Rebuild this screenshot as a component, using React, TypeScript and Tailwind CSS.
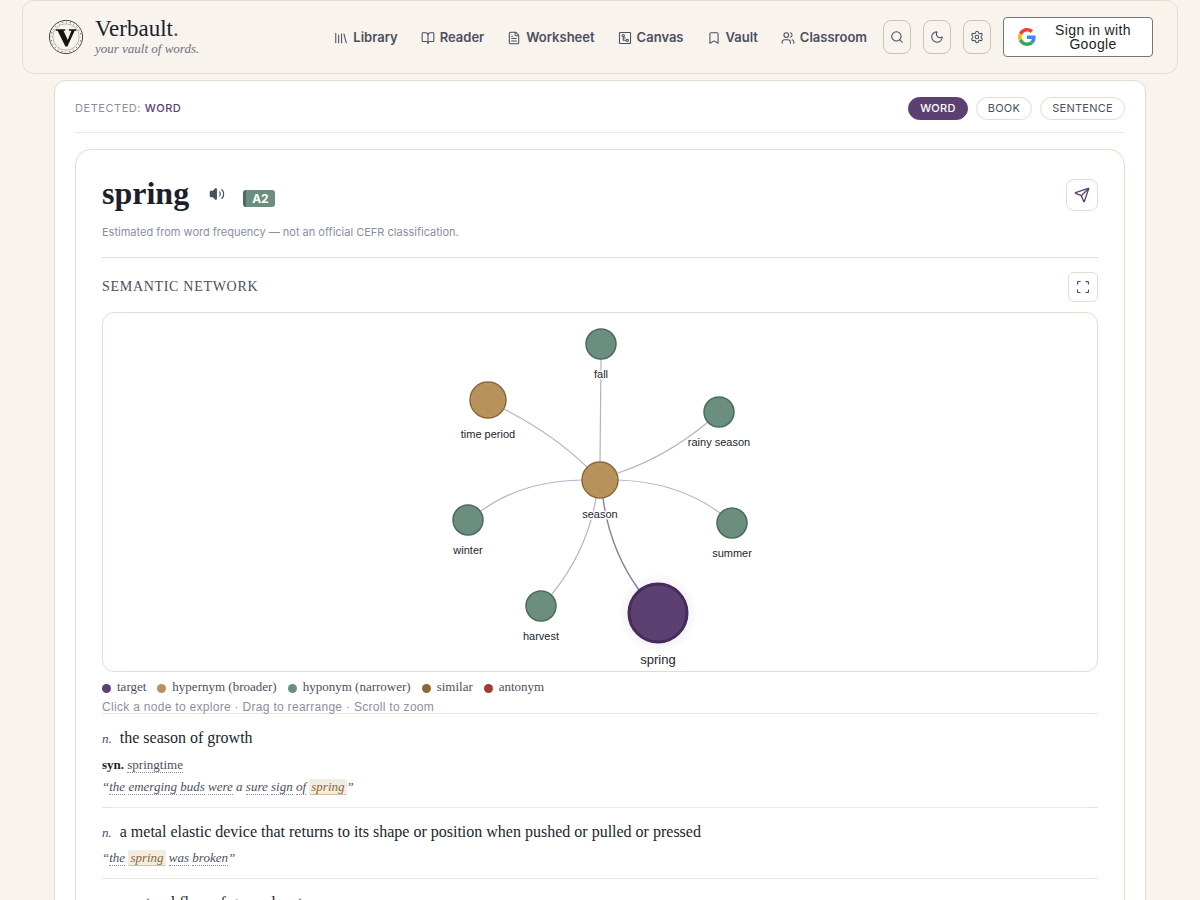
import { useState } from 'react';
import { BookOpen, Bookmark, FileText, Moon, Search, Send, Settings, Users, Volume2 } from 'lucide-react';

type Mode = 'word' | 'book' | 'sentence';
type NodeKind = 'target' | 'hypernym' | 'hyponym';

interface GraphNode {
  label: string;
  kind: NodeKind;
  x: number;
  y: number;
}

interface Sense {
  pos: string;
  definition: string;
  synonyms?: string[];
  example?: string[];
}

const serif = "font-['Liberation_Serif',serif]";
const sans = 'font-[Inter,sans-serif]';

const MODES: Mode[] = ['word', 'book', 'sentence'];

const NODES: GraphNode[] = [
  { label: 'fall', kind: 'hyponym', x: 498, y: 31 },
  { label: 'time period', kind: 'hypernym', x: 385, y: 87 },
  { label: 'rainy season', kind: 'hyponym', x: 616, y: 99 },
  { label: 'season', kind: 'hypernym', x: 497, y: 167 },
  { label: 'winter', kind: 'hyponym', x: 365, y: 207 },
  { label: 'summer', kind: 'hyponym', x: 629, y: 210 },
  { label: 'harvest', kind: 'hyponym', x: 438, y: 293 },
  { label: 'spring', kind: 'target', x: 555, y: 300 },
];

const EDGES = [
  'M497 149L498 46',
  'M401 96Q450 121 484 154',
  'M515 160Q563 144 605 109',
  'M479 167Q419 168 378 198',
  'M515 167Q575 169 617 200',
  'M493 185Q484 238 449 281',
];

const KIND_STYLE = {
  target: { r: 29, fill: '#5c4072', stroke: '#452c5c', strokeWidth: 3, labelOffset: 51 },
  hypernym: { r: 18, fill: '#b8925c', stroke: '#8c6a3a', strokeWidth: 1.5, labelOffset: 38 },
  hyponym: { r: 15, fill: '#6b8e7f', stroke: '#4a6d5e', strokeWidth: 1.5, labelOffset: 34 },
};

const LEGEND = [
  { label: 'target', dot: 'bg-[#5c4072]' },
  { label: 'hypernym (broader)', dot: 'bg-[#b8925c]' },
  { label: 'hyponym (narrower)', dot: 'bg-[#6b8e7f]' },
  { label: 'similar', dot: 'bg-[#8c6834]' },
  { label: 'antonym', dot: 'bg-[#a23b32]' },
];

const SENSES: Sense[] = [
  {
    pos: 'n.',
    definition: 'the season of growth',
    synonyms: ['springtime'],
    example: ['the', 'emerging', 'buds', 'were', 'a', 'sure', 'sign', 'of', 'spring'],
  },
  {
    pos: 'n.',
    definition: 'a metal elastic device that returns to its shape or position when pushed or pulled or pressed',
    example: ['the', 'spring', 'was', 'broken'],
  },
  { pos: 'n.', definition: 'a natural flow of ground water' },
];

function VaultLogo() {
  return (
    <svg viewBox="0 0 36 36" className="size-9 shrink-0" fill="none" aria-hidden="true">
      <circle cx="18" cy="18" r="16.6" stroke="#4a4a47" strokeWidth="1" />
      <circle cx="18" cy="18" r="13.2" stroke="#a3a19b" strokeWidth="0.7" />
      <circle cx="18" cy="18" r="14.9" stroke="#3a3a38" strokeWidth="1" strokeDasharray="1 6.802" strokeDashoffset="-3.4" />
      <circle cx="18" cy="18" r="14.9" stroke="#a3a19b" strokeWidth="3" strokeDasharray="0.7 7.102" strokeDashoffset="0.35" />
      <path d="M7.800 10.200h9.400v1.500h-1.700l4.300 9.300 3.600-9.300h-2.500v-1.500h7.400v1.500h-1.700L19.400 27.400h-2L9.600 11.700H7.800z" fill="#151512" />
    </svg>
  );
}

// Three upright spines and one that leans
function ShelfIcon() {
  return (
    <svg viewBox="0 0 24 24" className="size-3.5" fill="none" stroke="currentColor" strokeWidth="1.8" strokeLinecap="round" aria-hidden="true">
      <path d="M3 4v16M8 7v13M13 5v15M17 5l4 15" />
    </svg>
  );
}

function CanvasIcon() {
  return (
    <svg viewBox="0 0 24 24" className="size-3.5" fill="none" stroke="currentColor" strokeWidth="1.8" aria-hidden="true">
      <rect x="2.5" y="2.5" width="19" height="19" rx="1" />
      <circle cx="9" cy="8" r="2" />
      <circle cx="16" cy="16" r="2" />
      <path d="M9 10v6h5M9 12h4" />
    </svg>
  );
}

function GoogleIcon() {
  return (
    <svg viewBox="0 0 48 48" className="size-[18px] shrink-0" aria-hidden="true">
      <path fill="#EA4335" d="M24 9.5c3.54 0 6.71 1.22 9.21 3.6l6.85-6.85C35.9 2.38 30.47 0 24 0 14.62 0 6.51 5.38 2.56 13.22l7.98 6.19C12.43 13.72 17.74 9.5 24 9.5z" />
      <path fill="#4285F4" d="M46.98 24.55c0-1.57-.15-3.09-.38-4.55H24v9.02h12.94c-.58 2.96-2.26 5.48-4.78 7.18l7.73 6c4.51-4.18 7.09-10.36 7.09-17.65z" />
      <path fill="#FBBC05" d="M10.53 28.59c-.48-1.45-.76-2.99-.76-4.59s.27-3.14.76-4.59l-7.98-6.19C.92 16.46 0 20.12 0 24c0 3.88.92 7.54 2.56 10.78l7.97-6.19z" />
      <path fill="#34A853" d="M24 48c6.48 0 11.93-2.13 15.89-5.81l-7.73-6c-2.15 1.45-4.92 2.3-8.16 2.3-6.26 0-11.57-4.22-13.47-9.91l-7.98 6.19C6.51 42.62 14.62 48 24 48z" />
    </svg>
  );
}

function ExpandIcon() {
  return (
    <svg viewBox="0 0 12 12" className="size-3" fill="none" stroke="currentColor" strokeWidth="1.2" aria-hidden="true">
      <path d="M.6 3.500v-2a1 1 0 0 1 1-1h2M8.500 .6h2a1 1 0 0 1 1 1v2M11.500 8.500v2a1 1 0 0 1-1 1h-2M3.500 11.500h-2a1 1 0 0 1-1-1v-2" />
    </svg>
  );
}

const NAV = [
  { label: 'Library', icon: <ShelfIcon /> },
  { label: 'Reader', icon: <BookOpen size={14} strokeWidth={1.8} /> },
  { label: 'Worksheet', icon: <FileText size={14} strokeWidth={1.8} /> },
  { label: 'Canvas', icon: <CanvasIcon /> },
  { label: 'Vault', icon: <Bookmark size={14} strokeWidth={1.8} /> },
  { label: 'Classroom', icon: <Users size={14} strokeWidth={1.8} /> },
];

function Header() {
  const toolButton =
    'flex h-[34px] w-7 items-center justify-center rounded-lg border border-[#cbc3ae] text-[#4a5060]';

  return (
    <header className="mx-[22px] flex items-center justify-between rounded-xl border border-[#e5dccd] bg-[#f8f3ec] py-4 pr-6 pl-[25px]">
      <a href="#" className="flex items-center gap-[11px]">
        <VaultLogo />
        <span className={`flex flex-col ${serif}`}>
          <span className="text-[23px] leading-6 text-[#1a1f2e]">
            Verbault<span className="text-[#5c4072]">.</span>
          </span>
          <span className="text-[13px] leading-4 text-[#6b7080] italic">your vault of words.</span>
        </span>
      </a>

      <div className="flex items-center gap-4">
        <nav className={`flex items-center gap-[23px] pt-0.5 text-[13px] font-semibold text-[#4a5060] ${sans}`}>
          {NAV.map(({ label, icon }) => (
            <a key={label} href="#" className="flex items-center gap-[5px]">
              {icon}
              {label}
            </a>
          ))}
        </nav>

        <div className="flex items-center gap-3">
          <button type="button" aria-label="Search" className={toolButton}>
            <Search size={14} strokeWidth={1.8} />
          </button>
          <button type="button" aria-label="Dark mode" className={toolButton}>
            <Moon size={14} strokeWidth={1.8} />
          </button>
          <button type="button" aria-label="Settings" className={toolButton}>
            <Settings size={14} strokeWidth={1.8} />
          </button>
          <button
            type="button"
            className="flex h-10 w-[150px] items-center rounded border border-[#747775] bg-white px-3.5 font-['Liberation_Sans',sans-serif] text-sm leading-[14px] text-[#1f1f1f]"
          >
            <GoogleIcon />
            <span className="flex-1 pl-3 text-center tracking-wide">Sign in with Google</span>
          </button>
        </div>
      </div>
    </header>
  );
}

function SemanticGraph() {
  return (
    <svg
      viewBox="0 0 994 358"
      role="img"
      aria-label="Semantic network"
      className="block w-full rounded-xl font-['Liberation_Sans',sans-serif]"
    >
      <defs>
        <radialGradient id="halo">
          <stop offset="0.7" stopColor="#5c4072" stopOpacity="0.08" />
          <stop offset="1" stopColor="#5c4072" stopOpacity="0" />
        </radialGradient>
      </defs>
      <g fill="none" stroke="#b9afc6" strokeWidth="1.2">
        {EDGES.map(d => (
          <path key={d} d={d} />
        ))}
      </g>
      <path d="M500 185Q507 237 536 277" fill="none" stroke="#8d7b9e" strokeWidth="1.4" />
      <circle cx="555" cy="300" r="40" fill="url(#halo)" />
      {NODES.map(node => {
        const style = KIND_STYLE[node.kind];
        return (
          <g key={node.label} className="cursor-pointer">
            <circle cx={node.x} cy={node.y} r={style.r} fill={style.fill} stroke={style.stroke} strokeWidth={style.strokeWidth} />
            <text
              x={node.x}
              y={node.y + style.labelOffset}
              textAnchor="middle"
              fill="#1a1f2e"
              stroke="#fff"
              strokeWidth="3"
              paintOrder="stroke"
              fontSize={node.kind === 'target' ? 13 : 11}
            >
              {node.label}
            </text>
          </g>
        );
      })}
    </svg>
  );
}

function ExampleWord({ word, highlighted }: { word: string; highlighted: boolean }) {
  if (highlighted) {
    return (
      <mark className="rounded-xs border-b border-dotted border-[#b8925c] bg-[#f3ece3] px-0.5 text-[#8c6834]">{word}</mark>
    );
  }
  if (word.length < 2) return <span>{word}</span>;
  return <span className="border-b border-dotted border-[#8a8fa0]">{word}</span>;
}

function SenseRow({ sense, headword }: { sense: Sense; headword: string }) {
  return (
    <li className={`border-t border-[#ece5d8] pt-3 pb-[9px] ${serif}`}>
      <p className="mb-[3px] flex items-baseline gap-2 text-base leading-[23px] text-[#1a1f2e]">
        <span className="text-[13px] text-[#5c4072] italic">{sense.pos}</span>
        {sense.definition}
      </p>
      {sense.synonyms && (
        <p className="text-[13px] leading-[23px] text-[#4a5060]">
          <b className="text-[#1a1f2e]">syn.</b>{' '}
          {sense.synonyms.map(s => (
            <a key={s} href="#" className="border-b border-dotted border-[#8a8fa0]">
              {s}
            </a>
          ))}
        </p>
      )}
      {sense.example && (
        <p className="text-[13px] leading-[22px] text-[#4a5060] italic">
          “
          {sense.example.map((word, i) => (
            <span key={i}>
              {i > 0 && ' '}
              <ExampleWord word={word} highlighted={word === headword} />
            </span>
          ))}
          ”
        </p>
      )}
    </li>
  );
}

export default function App() {
  const [mode, setMode] = useState<Mode>('word');

  return (
    <div className="h-screen overflow-y-auto bg-[#f8f3ec] [scrollbar-width:none]">
      <Header />

      <main className="mx-[54px] mt-1.5 rounded-xl border border-[#e5dccd] bg-white px-5 pb-5">
        {/* Detected type */}
        <div className={`flex items-center justify-between border-b border-[#f0e8da] pt-4 pb-3 text-[11px] ${sans}`}>
          <p className="tracking-wider text-[#8a8fa0] uppercase">
            Detected: <span className="font-medium text-[#5c4072]">{mode}</span>
          </p>
          <div className="flex gap-2">
            {MODES.map(m => (
              <button
                key={m}
                type="button"
                onClick={() => setMode(m)}
                className={`rounded-full border px-[11px] leading-[21px] tracking-wide uppercase ${
                  m === mode
                    ? 'border-[#5c4072] bg-[#5c4072] font-medium text-white'
                    : 'border-[#e5dccd] bg-white text-[#4a5060]'
                }`}
              >
                {m}
              </button>
            ))}
          </div>
        </div>

        <article className="mt-4 rounded-2xl border border-[#e5dccd] px-[26px] pb-6">
          {/* Headword */}
          <div className="flex items-start justify-between border-b border-[#e5dccd] pt-6 pb-[17px]">
            <div>
              <div className="flex items-center">
                <h1 className={`pb-0.5 text-[32px] leading-[38px] font-bold text-[#1a1f2e] ${serif}`}>spring</h1>
                <button type="button" aria-label="Listen" className="ml-5 text-[#4a5060]">
                  <Volume2 size={16} strokeWidth={1.8} className="[&>path:first-child]:fill-current" />
                </button>
                <span
                  className={`mt-2 ml-[18px] rounded-[3px] border-l-3 border-[#4a6d5e] bg-[#6b8e7f] px-1.5 text-xs leading-[17px] font-bold text-white ${sans}`}
                >
                  A2
                </span>
              </div>
              <p className={`mt-2.5 text-[11px] leading-4 text-[#8a8fa0] ${sans}`}>
                Estimated from word frequency — not an official CEFR classification.
              </p>
            </div>
            <button
              type="button"
              aria-label="Send"
              className="mt-[5px] flex size-8 items-center justify-center rounded-lg border border-[#e5dccd] text-[#5c4072]"
            >
              <Send size={16} />
            </button>
          </div>

          {/* Semantic network */}
          <section>
            <div className="flex items-center justify-between pt-3.5 pb-2.5">
              <h2 className={`text-sm tracking-wider text-[#4a5060] uppercase ${serif}`}>Semantic network</h2>
              <button
                type="button"
                aria-label="Full screen"
                className="flex size-[30px] items-center justify-center rounded-md border border-[#e5dccd] text-[#5c4072]"
              >
                <ExpandIcon />
              </button>
            </div>
            <div className="rounded-xl border border-[#e5dccd]">
              <SemanticGraph />
            </div>
            <ul className={`mt-1.5 flex gap-[11px] text-[13px] leading-[18px] text-[#4a5060] ${serif}`}>
              {LEGEND.map(({ label, dot }) => (
                <li key={label} className="flex items-center gap-1.5">
                  <span className={`mt-0.5 size-[9px] rounded-full ${dot}`} />
                  {label}
                </li>
              ))}
            </ul>
            <p className="mt-[5px] font-['Liberation_Sans',sans-serif] text-xs leading-3 tracking-wide text-[#8a8fa0]">
              Click a node to explore · Drag to rearrange · Scroll to zoom
            </p>
          </section>

          <ol>
            {SENSES.map(sense => (
              <SenseRow key={sense.definition} sense={sense} headword="spring" />
            ))}
          </ol>
        </article>
      </main>
    </div>
  );
}
